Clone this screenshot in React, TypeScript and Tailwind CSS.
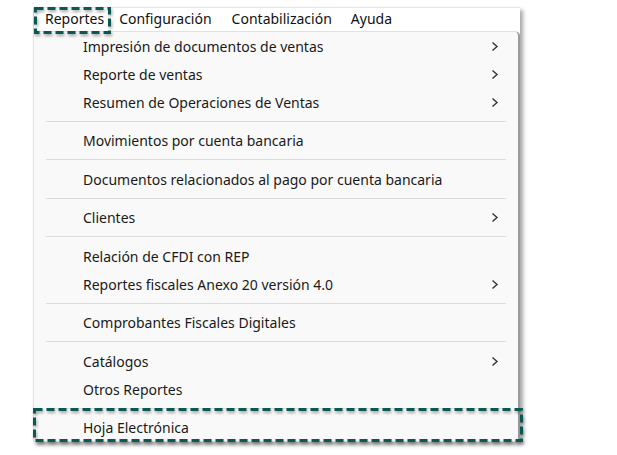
import React from "react";

type Item = { label: string; sub?: boolean } | "sep";

const items: Item[] = [
  { label: "Impresión de documentos de ventas", sub: true },
  { label: "Reporte de ventas", sub: true },
  { label: "Resumen de Operaciones de Ventas", sub: true },
  "sep",
  { label: "Movimientos por cuenta bancaria" },
  "sep",
  { label: "Documentos relacionados al pago por cuenta bancaria" },
  "sep",
  { label: "Clientes", sub: true },
  "sep",
  { label: "Relación de CFDI con REP" },
  { label: "Reportes fiscales Anexo 20 versión 4.0", sub: true },
  "sep",
  { label: "Comprobantes Fiscales Digitales" },
  "sep",
  { label: "Catálogos", sub: true },
  { label: "Otros Reportes" },
  "sep",
  { label: "Hoja Electrónica" },
];

function Chevron() {
  return (
    <svg width="8" height="11" viewBox="0 0 8 11" className="mr-[19px]">
      <path d="M1.5 1.5 L6 5.5 L1.5 9.5" fill="none" stroke="#3a3a3a" strokeWidth="1.5" />
    </svg>
  );
}

function Dashed({ className }: { className: string }) {
  // recuadro punteado de anotación
  return (
    <svg className={"absolute pointer-events-none overflow-visible " + className} style={{ filter: "drop-shadow(1px 2px 1.5px rgba(0,0,0,0.35))" }}>
      <rect x="1.5" y="1.5" width="calc(100% - 3px)" height="calc(100% - 3px)" fill="none" stroke="#0b5752" strokeWidth="3" strokeDasharray="8 4" />
    </svg>
  );
}

export default function App() {
  return (
    <div className="relative w-[617px] h-[455px] bg-white" style={{ fontFamily: '"Noto Sans", "Open Sans", sans-serif' }}>
      <div className="pt-[7px] pl-[33px]">
        <div className="w-[487px] bg-white border-t border-[#e6e6e6] shadow-[3px_3px_4px_rgba(0,0,0,0.35)]">
          <div className="flex h-[23px] pb-[3px] items-center text-[14px] text-[#111] border-l border-[#d0d0d0]">
            <span className="ml-[11px]">Reportes</span>
            <span className="ml-[15px]">Configuración</span>
            <span className="ml-[20px]">Contabilización</span>
            <span className="ml-[19px]">Ayuda</span>
          </div>
          <div className="h-[411px] bg-[#f9f9f9] border border-[#e2e2e2] border-r-[#9a9a9a] border-r-2 rounded-tr-[5px]">
            {items.map((it, i) =>
              it === "sep" ? (
                <div key={i} className="h-[10.5px] flex items-center px-[12px]">
                  <div className="h-px w-full bg-[#dcdcdc]" />
                </div>
              ) : (
                <div key={i} className="h-[28px] flex items-center justify-between text-[14px] text-[#1a1a1a]">
                  <span className="ml-[49px]">{it.label}</span>
                  {it.sub && <Chevron />}
                </div>
              )
            )}
          </div>
        </div>
      </div>
      <Dashed className="left-[34px] top-[7px] w-[77px] h-[27px]" />
      <Dashed className="left-[33px] top-[408px] w-[490px] h-[34px]" />
    </div>
  );
}
